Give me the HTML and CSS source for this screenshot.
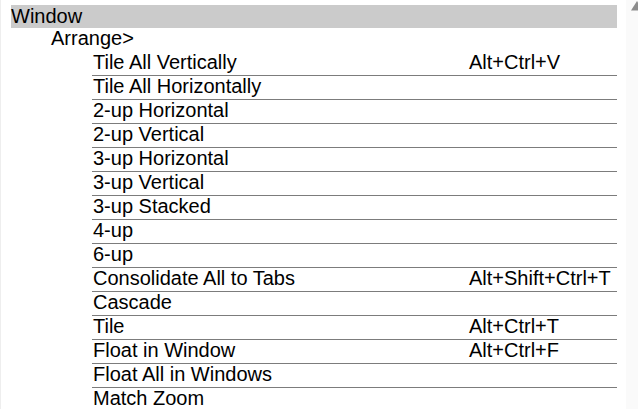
FILE: index.html
```html
<!DOCTYPE html>
<html lang="en">
<head>
<meta charset="utf-8">
<title>Window menu</title>
<link rel="stylesheet" href="styles.css">
</head>
<body>
<div class="frame">
  <div class="menu">
    <div class="header">Window</div>
    <div class="sub">Arrange&gt;</div>
    <div class="items">
      <div class="item"><span class="label">Tile All Vertically</span><span class="key">Alt+Ctrl+V</span></div>
      <div class="item"><span class="label">Tile All Horizontally</span><span class="key"></span></div>
      <div class="item"><span class="label">2-up Horizontal</span><span class="key"></span></div>
      <div class="item"><span class="label">2-up Vertical</span><span class="key"></span></div>
      <div class="item"><span class="label">3-up Horizontal</span><span class="key"></span></div>
      <div class="item"><span class="label">3-up Vertical</span><span class="key"></span></div>
      <div class="item"><span class="label">3-up Stacked</span><span class="key"></span></div>
      <div class="item"><span class="label">4-up</span><span class="key"></span></div>
      <div class="item"><span class="label">6-up</span><span class="key"></span></div>
      <div class="item"><span class="label">Consolidate All to Tabs</span><span class="key">Alt+Shift+Ctrl+T</span></div>
      <div class="item"><span class="label">Cascade</span><span class="key"></span></div>
      <div class="item"><span class="label">Tile</span><span class="key">Alt+Ctrl+T</span></div>
      <div class="item"><span class="label">Float in Window</span><span class="key">Alt+Ctrl+F</span></div>
      <div class="item"><span class="label">Float All in Windows</span><span class="key"></span></div>
      <div class="item"><span class="label">Match Zoom</span><span class="key"></span></div>
    </div>
  </div>
  <div class="scrollbar">
    <svg class="arrow" width="12" height="12" viewBox="0 0 12 12"><polygon points="11,1 5,10.5 17,10.5" fill="#8c8c8c"/></svg>
  </div>
</div>
</body>
</html>
```
FILE: styles.css
```css
html, body {
  margin: 0;
  padding: 0;
  background: #ffffff;
}
body {
  font-family: "Liberation Sans", Arial, sans-serif;
  font-size: 20px;
  color: #000000;
}
.frame {
  display: flex;
  height: 409px;
  overflow: hidden;
  border-left: 1px solid #eeeeee;
  box-sizing: border-box;
}
.menu {
  margin: 5px 0 0 10px;
  width: 606px;
  flex: none;
}
.header {
  background: #cbcbcb;
  height: 23px;
  line-height: 22px;
}
.sub {
  height: 24px;
  line-height: 20px;
  padding-left: 40px;
}
.items {
  margin-left: 81px;
}
.item {
  display: flex;
  height: 24px;
  box-sizing: border-box;
  border-bottom: 1px solid #7c7c7c;
  line-height: 20px;
  padding-left: 1px;
  white-space: nowrap;
}
.label {
  flex: 1;
}
.key {
  width: 148px;
  flex: none;
}
.scrollbar {
  margin-left: auto;
  width: 12px;
  flex: none;
  background: #fafafa;
  overflow: hidden;
}
.arrow {
  display: block;
}
```
